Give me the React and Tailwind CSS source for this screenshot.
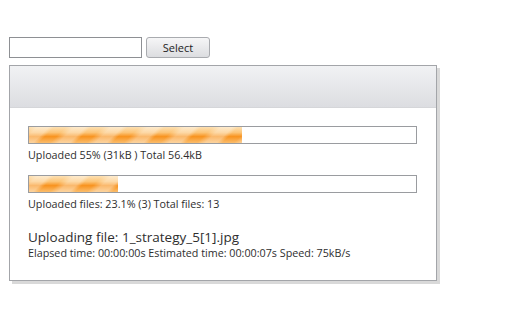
import React from 'react';

const stripes =
  'bg-[image:repeating-linear-gradient(135deg,rgba(255,255,255,0)_0px,rgba(255,255,255,0.35)_6px,rgba(255,255,255,0.35)_14px,rgba(255,255,255,0)_18px,rgba(255,255,255,0)_26px),linear-gradient(to_bottom,#fde0b2_0%,#fcc476_35%,#f8931f_60%,#fbbd6c_100%)]';

function ProgressBar({ percent }) {
  return (
    <div className="h-[18px] w-[389px] border border-[#9a9ca0] bg-white">
      <div className={`h-full ${stripes}`} style={{ width: `${percent}%` }} />
    </div>
  );
}

export default function App() {
  return (
    <div className="min-h-screen bg-white pt-[37px] pl-[9px] font-['Open_Sans',sans-serif] text-[#2e2e2e]">
      {/* file picker */}
      <div className="flex items-center gap-[4px]">
        <input
          type="text"
          className="h-[21px] w-[133px] border border-[#8e9094] bg-white outline-none"
        />
        <button className="h-[21px] w-[64px] rounded-[3px] border border-[#a9abaf] bg-gradient-to-b from-[#f6f6f7] to-[#dcdde0] text-[11px] leading-none text-[#222]">
          Select
        </button>
      </div>

      {/* upload panel */}
      <div className="mt-[7px] w-[428px] border border-[#a3a5a9] bg-white shadow-[3px_3px_0_#d9d9d9]">
        <div className="h-[42px] border-b border-[#d5d6d9] bg-gradient-to-b from-[#f1f2f4] to-[#dcdde1]" />
        <div className="px-[18px] pt-[18px] pb-[20px] text-[10.75px]">
          <ProgressBar percent={55} />
          <div className="mt-[4px] leading-[14px]">Uploaded 55% (31kB ) Total 56.4kB</div>

          <div className="mt-[13px]">
            <ProgressBar percent={23.1} />
          </div>
          <div className="mt-[4px] leading-[14px]">Uploaded files: 23.1% (3) Total files: 13</div>

          <div className="mt-[17px] text-[13.5px] leading-[18px]">Uploading file: 1_strategy_5[1].jpg</div>
          <div className="leading-[14px]">Elapsed time: 00:00:00s Estimated time: 00:00:07s Speed: 75kB/s</div>
        </div>
      </div>
    </div>
  );
}
